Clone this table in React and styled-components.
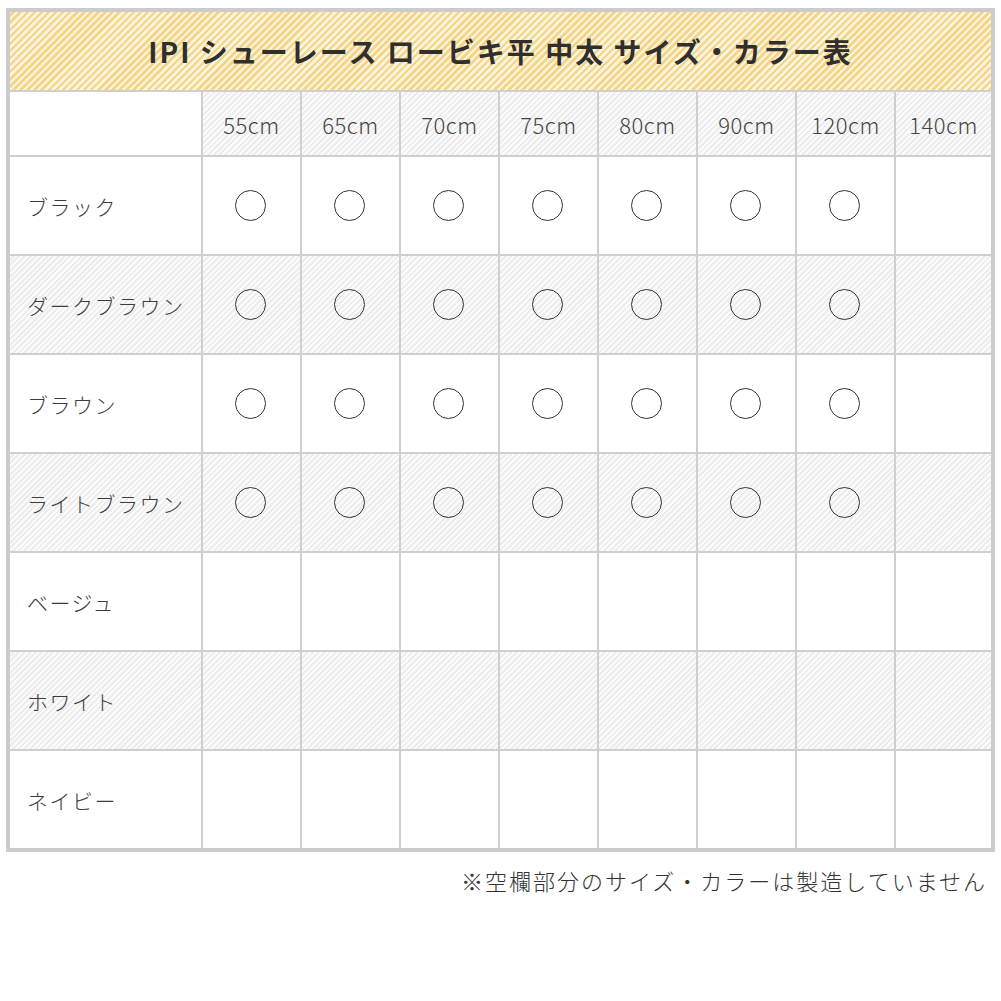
import styled, { createGlobalStyle } from "styled-components";

const GlobalStyle = createGlobalStyle`
  body {
    margin: 0;
    background: #fff;
    font-family: "Noto Sans CJK JP", "Noto Sans", sans-serif;
  }
`;

const Page = styled.div`
  width: 1001px;
  height: 1001px;
  padding: 8px 6px 0 6px;
  box-sizing: border-box;
`;

const Table = styled.div`
  border: 4px solid #cccccc;
  background: #cfcfcf;
  display: grid;
  grid-template-columns: 191px repeat(7, 97px) 1fr;
  grid-template-rows: 78px 63px repeat(7, 97px);
  gap: 2px;
`;

const stripes = (a, b, size) => `repeating-linear-gradient(
  -45deg,
  ${a} 0px,
  ${a} ${size}px,
  ${b} ${size}px,
  ${b} ${size * 2}px
)`;

const Title = styled.div`
  grid-column: 1 / -1;
  display: flex;
  align-items: center;
  justify-content: center;
  background: ${stripes("#f3d68c", "#fdf3d9", 2.5)};
  color: #2f2f2f;
  font-size: 28px;
  font-weight: 700;
  letter-spacing: 2px;
`;

const Cell = styled.div`
  display: flex;
  align-items: center;
  justify-content: ${(p) => (p.$label ? "flex-start" : "center")};
  padding-left: ${(p) => (p.$label ? "17px" : "0")};
  background: ${(p) => (p.$striped ? stripes("#ededed", "#fbfbfb", 2) : "#ffffff")};
  color: ${(p) => (p.$label ? "#3c3c3c" : "#444")};
  font-size: ${(p) => (p.$label ? "21px" : "22px")};
  font-weight: 300;
  letter-spacing: ${(p) => (p.$label ? "1.5px" : "0.5px")};
`;

const Mark = styled.span`
  display: block;
  width: 29px;
  height: 29px;
  border: 1.4px solid #333;
  border-radius: 50%;
  margin-right: 3px;
`;

const Note = styled.p`
  margin: 12px 8px 0 0;
  text-align: right;
  font-size: 22px;
  font-weight: 300;
  letter-spacing: 2px;
  color: #333;
`;

const sizes = ["55cm", "65cm", "70cm", "75cm", "80cm", "90cm", "120cm", "140cm"];
const colors = [
  { name: "ブラック", avail: 7 },
  { name: "ダークブラウン", avail: 7 },
  { name: "ブラウン", avail: 7 },
  { name: "ライトブラウン", avail: 7 },
  { name: "ベージュ", avail: 0 },
  { name: "ホワイト", avail: 0 },
  { name: "ネイビー", avail: 0 },
];

export default function App() {
  return (
    <Page>
      <GlobalStyle />
      <Table>
        <Title>IPI シューレース ロービキ平 中太 サイズ・カラー表</Title>
        <Cell $label />
        {sizes.map((s) => (
          <Cell key={s} $striped>
            {s}
          </Cell>
        ))}
        {colors.map((c, i) => (
          <>
            <Cell key={c.name} $label $striped={i % 2 === 1}>
              {c.name}
            </Cell>
            {sizes.map((s, j) => (
              <Cell key={c.name + s} $striped={i % 2 === 1}>
                {j < c.avail && <Mark aria-label="○" />}
              </Cell>
            ))}
          </>
        ))}
      </Table>
      <Note>※空欄部分のサイズ・カラーは製造していません</Note>
    </Page>
  );
}
